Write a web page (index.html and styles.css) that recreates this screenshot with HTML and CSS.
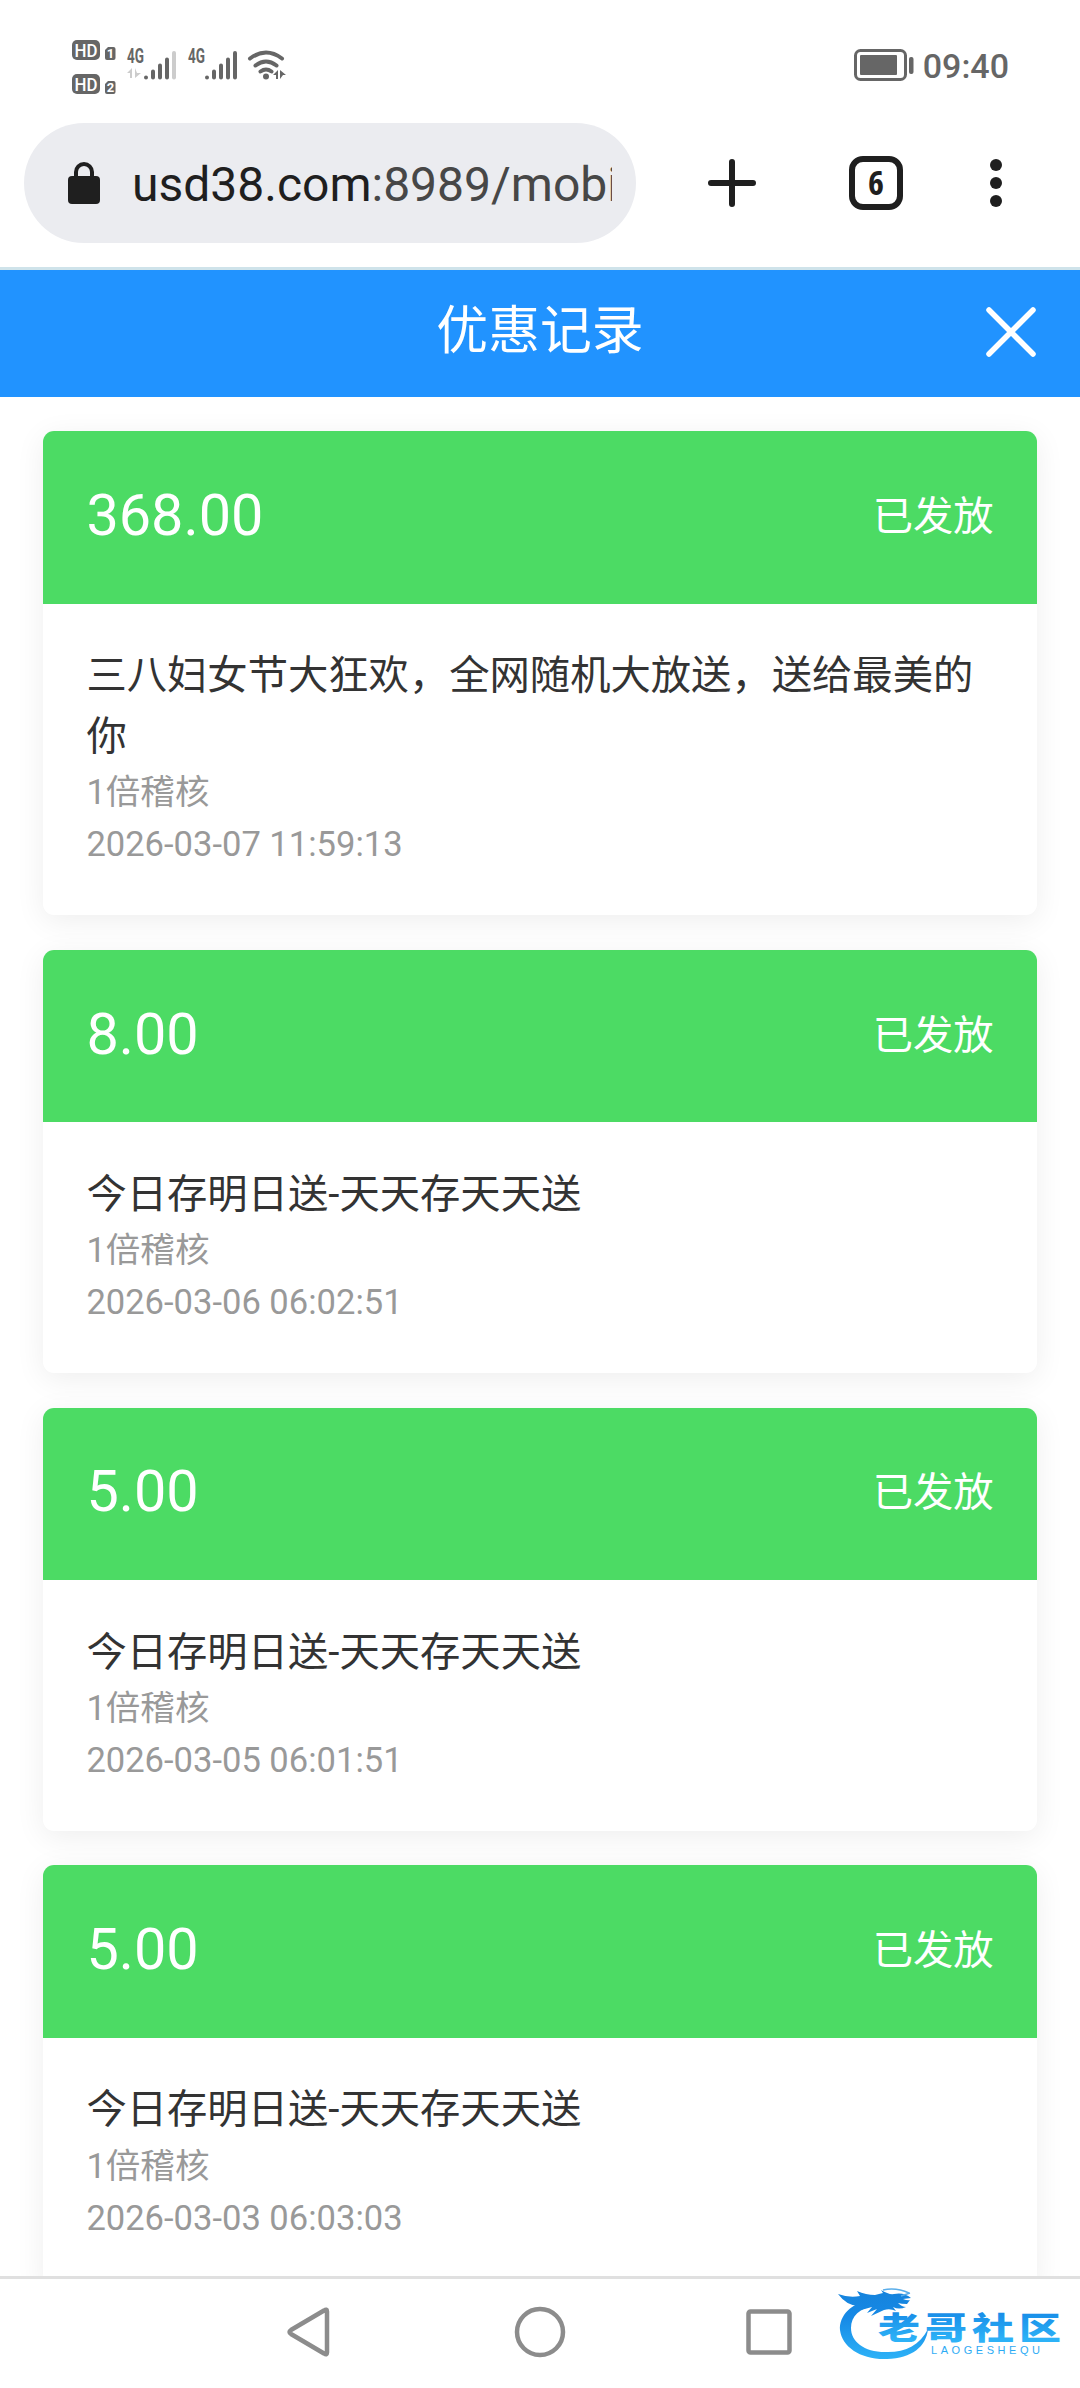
FILE: index.html
```html
<!DOCTYPE html>
<html lang="zh-CN">
<head>
  <meta charset="UTF-8">
  <meta name="viewport" content="width=device-width, initial-scale=1.0">
  <title>优惠记录</title>
  <link rel="stylesheet" href="styles.css">
</head>
<body>
  <div class="status-bar">
    <div class="status-icons">
      <svg class="hd" width="44" height="54" viewBox="0 0 44 54">
        <rect x="0" y="0" width="28" height="20" rx="5"/>
        <text x="14" y="16.500" textLength="23" lengthAdjust="spacingAndGlyphs">HD</text>
        <path d="M33 10l3-3h5.500a2 2 0 0 1 2 2v9a2 2 0 0 1-2 2h-6.500a2 2 0 0 1-2-2z"/>
        <text class="sim" x="38.500" y="18">1</text>
        <rect x="0" y="34" width="28" height="20" rx="5"/>
        <text x="14" y="50.500" textLength="23" lengthAdjust="spacingAndGlyphs">HD</text>
        <path d="M33 44l3-3h5.500a2 2 0 0 1 2 2v9a2 2 0 0 1-2 2h-6.500a2 2 0 0 1-2-2z"/>
        <text class="sim" x="38.500" y="52">2</text>
      </svg>
      <svg class="signal" width="51" height="34" viewBox="0 0 51 34">
        <text x="0" y="15" textLength="17" lengthAdjust="spacingAndGlyphs">4G</text>
        <path class="faint" d="M0 25l5-5v10H3v-5zM8 20v10l6-5h-4z"/>
        <path d="M19 29.500v.1M26 23.500v6M33 17.500v12M40 11.500v18"/>
        <path class="faint-bar" d="M47 5v24.500"/>
      </svg>
      <svg class="signal" width="51" height="34" viewBox="0 0 51 34">
        <text x="0" y="15" textLength="17" lengthAdjust="spacingAndGlyphs">4G</text>
        <path d="M19 29.500v.1M26 23.500v6M33 17.500v12M40 11.500v18M47 5v24.500"/>
      </svg>
      <svg class="wifi" width="38" height="34" viewBox="0 0 38 34">
        <path d="M2 10.500q16-12 32 0M7.500 17.500q10.500-8 21 0M12.500 23.500q5.500-4 11 0"/>
        <circle cx="18" cy="28.500" r="3"/>
        <path class="arrows" d="M25 27l5-5v9h-2v-4zM32 22l6 5h-3l-3 4z"/>
      </svg>
    </div>
    <div class="status-right">
      <svg class="battery" width="60" height="34" viewBox="0 0 60 34">
        <rect class="outline" x="1.500" y="1.500" width="50" height="29" rx="5"/>
        <rect x="6" y="6" width="37" height="20" rx="1"/>
        <rect x="55" y="8" width="4.500" height="17" rx="2"/>
      </svg>
      <span class="clock">09:40</span>
    </div>
  </div>

  <div class="browser-bar">
    <div class="address">
      <svg class="lock" width="32" height="42" viewBox="0 0 32 42">
        <rect y="14" width="32" height="28" rx="4"/>
        <path d="M8 16v-6a8 8 0 0 1 16 0v6"/>
      </svg>
      <div class="url">usd38.com<span>:8989/mobile</span></div>
    </div>
    <svg class="new-tab" width="48" height="48" viewBox="0 0 48 48">
      <path d="M24 3v42M3 24h42"/>
    </svg>
    <div class="tab-count">6</div>
    <svg class="menu" width="12" height="48" viewBox="0 0 12 48">
      <circle cx="6" cy="6" r="6"/>
      <circle cx="6" cy="24" r="6"/>
      <circle cx="6" cy="42" r="6"/>
    </svg>
  </div>

  <div class="title-bar">
    <h1>优惠记录</h1>
    <svg class="close" width="50" height="50" viewBox="0 0 50 50">
      <path d="M3 3l44 44M47 3L3 47"/>
    </svg>
  </div>

  <div class="list">
    <div class="card">
      <div class="card-head">
        <span class="amount">368.00</span>
        <span class="state">已发放</span>
      </div>
      <div class="card-body">
        <p class="name">三八妇女节大狂欢，全网随机大放送，送给最美的你</p>
        <p>1倍稽核</p>
        <p>2026-03-07 11:59:13</p>
      </div>
    </div>
    <div class="card">
      <div class="card-head">
        <span class="amount">8.00</span>
        <span class="state">已发放</span>
      </div>
      <div class="card-body">
        <p class="name">今日存明日送-天天存天天送</p>
        <p>1倍稽核</p>
        <p>2026-03-06 06:02:51</p>
      </div>
    </div>
    <div class="card">
      <div class="card-head">
        <span class="amount">5.00</span>
        <span class="state">已发放</span>
      </div>
      <div class="card-body">
        <p class="name">今日存明日送-天天存天天送</p>
        <p>1倍稽核</p>
        <p>2026-03-05 06:01:51</p>
      </div>
    </div>
    <div class="card">
      <div class="card-head">
        <span class="amount">5.00</span>
        <span class="state">已发放</span>
      </div>
      <div class="card-body">
        <p class="name">今日存明日送-天天存天天送</p>
        <p>1倍稽核</p>
        <p>2026-03-03 06:03:03</p>
      </div>
    </div>
  </div>

  <div class="nav-bar">
    <svg width="50" height="50" viewBox="0 0 50 50">
      <path d="M42 4.500v41q0 3-3 1L6 27q-3-2 0-4L39 3.500q3-2 3 1z"/>
    </svg>
    <svg width="50" height="50" viewBox="0 0 50 50">
      <circle cx="25" cy="25" r="23"/>
    </svg>
    <svg width="50" height="50" viewBox="0 0 50 50">
      <rect x="4.500" y="4.500" width="41" height="41" rx="2"/>
    </svg>
    <svg class="logo" width="230" height="82" viewBox="0 0 230 82">
      <defs>
        <linearGradient id="blue" gradientUnits="userSpaceOnUse" x1="0" y1="5" x2="0" y2="74">
          <stop offset="0" stop-color="#1583dc"/>
          <stop offset="0.400" stop-color="#1689e6"/>
          <stop offset="1" stop-color="#2db2f7"/>
        </linearGradient>
      </defs>
      <!-- dragon -->
      <path d="M34 14C14 18 2 31 3 45C5 62 24 75 50 74C75 73 89 62 91 44C83 60 69 67 51 67C28 68 14 57 14 43C14 31 23 23 37 21z"/>
      <path d="M1 9q11 4 22 2L20 6q9 4 18 4l8-2l-2-3q8 5 13 4q10-2 17 4l-8 1q5 2 7 1l-3 4q-6 0-9-1q4 4 8 4q-7 3-13 0l3 4q-6-3-12-1l-13 6l6-7l-10 4l5-6l-11 3l4-5q-16 4-27-11z"/>
      <path class="whisker" d="M46 5q13-3 26 3M64 11l9-3"/>
      <text class="logo-name" x="41" y="73.500" transform="scale(1 0.740)">老哥社区</text>
      <text class="logo-sub" x="94" y="68.500" textLength="109">LAOGESHEQU</text>
    </svg>
  </div>
</body>
</html>
```
FILE: styles.css
```css
* {
  box-sizing: border-box;
}

body {
  margin: 0;
  width: 1080px;
  height: 2388px;
  display: flex;
  flex-direction: column;
  overflow: hidden;
  background: #fff;
  color: #333;
  font-family: Roboto, "Noto Sans CJK SC", sans-serif;
}

svg {
  display: block;
  flex: none;
  overflow: visible;
}

/* phone status bar */
.status-bar {
  flex: none;
  height: 123px;
  padding: 40px 71px 0 72px;
  display: flex;
  justify-content: space-between;
  fill: #666;
  color: #666;
}

.status-icons {
  display: flex;
}

.hd text {
  fill: #fff;
  font-size: 18px;
  font-weight: 500;
  text-anchor: middle;
}

.hd .sim {
  font-size: 13px;
  font-weight: 700;
}

.signal {
  margin-top: 8px;
  margin-left: 10px;
}

.hd + .signal {
  margin-left: 11px;
}

.signal text {
  font-size: 20px;
  font-weight: 700;
}

.signal path {
  fill: none;
  stroke: #666;
  stroke-width: 4;
  stroke-linecap: round;
}

.signal .faint {
  fill: #ccc;
  stroke: none;
}

.signal .faint-bar {
  stroke: #ccc;
}

.wifi {
  margin-top: 8px;
  margin-left: 9px;
}

.wifi path {
  fill: none;
  stroke: #666;
  stroke-width: 4;
  stroke-linecap: round;
}

.wifi .arrows {
  fill: #666;
  stroke: none;
}

.status-right {
  display: flex;
}

.battery {
  margin-top: 9px;
}

.battery .outline {
  fill: none;
  stroke: #666;
  stroke-width: 3;
}

.clock {
  margin-left: 9px;
  margin-top: 6px;
  font-size: 34px;
  line-height: 40px;
  font-weight: 500;
}

/* browser toolbar */
.browser-bar {
  flex: none;
  height: 147px;
  padding: 0 78px 0 24px;
  display: flex;
  align-items: flex-start;
  border-bottom: 3px solid #cfe3ea;
}

.address {
  width: 612px;
  height: 120px;
  padding: 0 24px 0 44px;
  border-radius: 60px;
  background: #ebecf0;
  display: flex;
  align-items: center;
}

.lock {
  fill: #1f1f1f;
}

.lock path {
  fill: none;
  stroke: #1f1f1f;
  stroke-width: 4;
}

.url {
  flex: 1;
  margin-left: 32px;
  padding-top: 3px;
  overflow: hidden;
  white-space: nowrap;
  font-size: 48px;
  line-height: 60px;
  color: #1f1f1f;
}

.url span {
  color: #474747;
}

.new-tab {
  margin: 36px 0 0 72px;
  fill: none;
  stroke: #1f1f1f;
  stroke-width: 6;
  stroke-linecap: round;
}

.tab-count {
  width: 54px;
  height: 54px;
  margin: 33px 0 0 93px;
  border: 6px solid #1f1f1f;
  border-radius: 14px;
  color: #1f1f1f;
  font-family: "Open Sans", sans-serif;
  font-size: 34px;
  font-weight: 700;
  font-stretch: condensed;
  line-height: 41px;
  text-align: center;
}

.menu {
  margin: 36px 0 0 87px;
  fill: #1f1f1f;
}

/* page header */
.title-bar {
  flex: none;
  height: 126.72px;
  padding: 0 44px 3px;
  display: grid;
  grid-template-columns: 50px 1fr 50px;
  align-items: center;
  background: #2193ff;
  color: #fff;
}

.title-bar h1 {
  grid-column: 2;
  margin: 0;
  font-size: 51.84px;
  line-height: 122px;
  font-weight: 400;
  text-align: center;
}

.close {
  fill: none;
  stroke: #fff;
  stroke-width: 5.5;
  stroke-linecap: round;
}

/* records */
.list {
  flex: 1;
  min-height: 0;
  overflow: hidden;
  padding: 34.56px 43.2px 0;
}

.card {
  margin-bottom: 34.56px;
  border-radius: 11px;
  background: #fff;
  box-shadow: 0 6px 30px rgba(0, 0, 0, 0.07);
  overflow: hidden;
}

.card-head {
  height: 172.8px;
  padding: 0 43.2px 4px;
  display: flex;
  align-items: center;
  justify-content: space-between;
  background: #4cdb64;
  color: #fff;
}

.amount {
  font-size: 57.6px;
}

.state {
  padding-bottom: 6px;
  font-size: 40.32px;
}

.card-body {
  padding: 43.2px;
}

.card-body p {
  margin: 0;
  font-size: 34.56px;
  line-height: 51.84px;
  color: #999;
}

.card-body .name {
  margin-top: -1px;
  margin-bottom: 1px;
  font-size: 40.32px;
  line-height: 60.48px;
  color: #333;
}

/* keep the meta lines tight under the name */
.card-body .name + p {
  margin-top: -1px;
}

.card-body p:last-child {
  margin-bottom: 1px;
}

/* system navigation */
.nav-bar {
  flex: none;
  height: 112px;
  padding: 28px 10px 0 285px;
  display: flex;
  border-top: 3px solid #e0e0e0;
  fill: none;
  stroke: #8c8c8c;
  stroke-width: 4.5;
}

.nav-bar svg + svg {
  margin-left: 180px;
}

.nav-bar svg:nth-child(3) {
  margin-left: 179px;
}

.nav-bar svg + .logo {
  margin: -22px 0 0 43px;
  fill: url(#blue);
  stroke: none;
}

.logo .whisker {
  fill: none;
  stroke: #5aaeea;
  stroke-width: 1.5;
}

.logo-name {
  font-family: "Noto Sans CJK SC", sans-serif;
  font-size: 42px;
  font-weight: 900;
  letter-spacing: 5px;
}

.logo-sub {
  font-family: "Liberation Sans", sans-serif;
  font-size: 11px;
}
```
